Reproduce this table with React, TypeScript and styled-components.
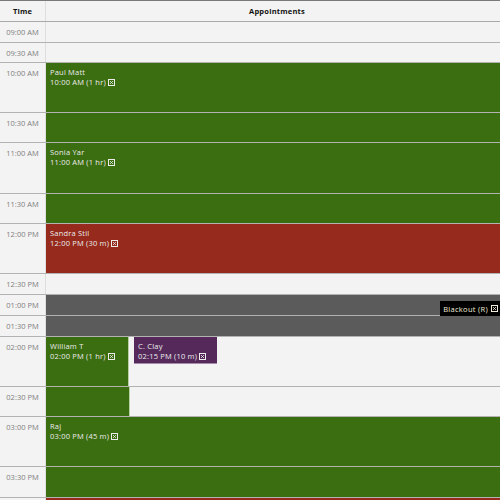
import React from "react";
import styled, { createGlobalStyle } from "styled-components";

const GlobalStyle = createGlobalStyle`
  html, body { margin: 0; padding: 0; overflow: hidden; background: #ffffff; }
  body { font-family: "Open Sans", "Noto Sans", sans-serif; }
`;

const Table = styled.div`
  width: 500px;
  border-top: 1px solid #7a7a7a;
  background: #f3f3f3;
`;

const HeaderRow = styled.div`
  display: flex;
  height: 20px;
  border-bottom: 1px solid #a9a9a9;
  background: #f3f3f3;
`;

const HeadCell = styled.div<{ $time?: boolean }>`
  ${(p) => (p.$time ? "width: 45px; border-right: 1px solid #dedede;" : "flex: 1; padding-left: 8px;")}
  display: flex;
  align-items: center;
  justify-content: center;
  font-size: 7.5px;
  font-weight: 700;
  letter-spacing: 0.2px;
  color: #111;
`;

const Row = styled.div<{ $h: number }>`
  display: flex;
  height: ${(p) => p.$h}px;
  border-bottom: 1px solid #b2b2b2;
`;

const TimeCell = styled.div`
  width: 46px;
  flex-shrink: 0;
  border-right: 1px solid #dedede;
  background: #f3f3f3;
  color: #808080;
  font-size: 7.5px;
  line-height: 10px;
  text-align: center;
  padding-top: 5px;
  box-sizing: border-box;
`;

const SlotCell = styled.div<{ $fill?: string }>`
  flex: 1;
  display: flex;
  align-items: flex-start;
  background: ${(p) => p.$fill || "#f3f3f3"};
`;

const Appt = styled.div<{ $color: string; $w?: number; $short?: boolean; $gap?: number }>`
  ${(p) => (p.$w ? `width: ${p.$w}px; flex-shrink: 0;` : "flex: 1;")}
  height: ${(p) => (p.$short ? "27px" : "100%")};
  margin-left: ${(p) => p.$gap || 0}px;
  background: ${(p) => p.$color};
  color: #ececec;
  font-size: 7.5px;
  line-height: 10px;
  letter-spacing: 0.2px;
  padding: 4px 4px 0;
  box-sizing: border-box;
  ${(p) => (p.$short ? "border-bottom: 1px solid #a58aa9;" : "")}
  ${(p) => (p.$w && !p.$short ? "border-right: 1px solid #b9d0a6;" : "")}
`;

const Filler = styled.div<{ $color: string; $w: number }>`
  width: ${(p) => p.$w}px;
  height: 100%;
  background: ${(p) => p.$color};
  border-right: 1px solid #b9d0a6;
`;

const Line = styled.div`
  display: flex;
  align-items: center;
  gap: 2px;
  white-space: nowrap;
`;

const BlackoutWrap = styled.div`
  flex: 1;
  display: flex;
  justify-content: flex-end;
  padding-top: 6px;
`;

const Blackout = styled.div`
  display: flex;
  align-items: center;
  gap: 3px;
  height: 15px;
  padding: 0 2px 0 3px;
  background: #000;
  color: #f3ecd8;
  font-size: 7.5px;
  letter-spacing: 0.3px;
  white-space: nowrap;
`;

const XBox = () => (
  <svg width="7" height="7" viewBox="0 0 7 7" style={{ flexShrink: 0 }}>
    <rect x="0.5" y="0.5" width="6" height="6" fill="none" stroke="currentColor" strokeWidth="1" />
    <path d="M2 2 L5 5 M5 2 L2 5" stroke="currentColor" strokeWidth="0.8" />
  </svg>
);

const GREEN = "#3b6d11";
const RED = "#952a1d";
const GRAY = "#5b5b5b";
const PURPLE = "#552a5b";

type A = { name: string; time: string; color: string; w?: number; short?: boolean; gap?: number };
type R = {
  t: string;
  h: number;
  fill?: string;
  appts?: A[];
  filler?: { color: string; w: number };
  blackout?: boolean;
};

const rows: R[] = [
  { t: "09:00 AM", h: 20 },
  { t: "09:30 AM", h: 19 },
  { t: "10:00 AM", h: 49, appts: [{ name: "Paul Matt", time: "10:00 AM (1 hr)", color: GREEN }] },
  { t: "10:30 AM", h: 29, fill: GREEN },
  { t: "11:00 AM", h: 50, appts: [{ name: "Sonia Yar", time: "11:00 AM (1 hr)", color: GREEN }] },
  { t: "11:30 AM", h: 29, fill: GREEN },
  { t: "12:00 PM", h: 49, appts: [{ name: "Sandra Stil", time: "12:00 PM (30 m)", color: RED }] },
  { t: "12:30 PM", h: 20 },
  { t: "01:00 PM", h: 20, fill: GRAY, blackout: true },
  { t: "01:30 PM", h: 20, fill: GRAY },
  {
    t: "02:00 PM",
    h: 49,
    appts: [
      { name: "William T", time: "02:00 PM (1 hr)", color: GREEN, w: 83 },
      { name: "C. Clay", time: "02:15 PM (10 m)", color: PURPLE, w: 83, short: true, gap: 5 },
    ],
  },
  { t: "02:30 PM", h: 29, filler: { color: GREEN, w: 83 } },
  { t: "03:00 PM", h: 49, appts: [{ name: "Raj", time: "03:00 PM (45 m)", color: GREEN }] },
  { t: "03:30 PM", h: 30, fill: GREEN },
  { t: "", h: 20, fill: RED },
];

export default function App() {
  return (
    <>
      <GlobalStyle />
      <Table>
        <HeaderRow>
          <HeadCell $time>Time</HeadCell>
          <HeadCell>Appointments</HeadCell>
        </HeaderRow>
        {rows.map((r, i) => (
          <Row key={i} $h={r.h}>
            <TimeCell>{r.t}</TimeCell>
            <SlotCell $fill={r.fill}>
              {r.filler && <Filler $color={r.filler.color} $w={r.filler.w} />}
              {r.appts?.map((a) => (
                <Appt key={a.name} $color={a.color} $w={a.w} $short={a.short} $gap={a.gap}>
                  <Line>{a.name}</Line>
                  <Line>
                    {a.time} <XBox />
                  </Line>
                </Appt>
              ))}
              {r.blackout && (
                <BlackoutWrap>
                  <Blackout>
                    Blackout (R) <XBox />
                  </Blackout>
                </BlackoutWrap>
              )}
            </SlotCell>
          </Row>
        ))}
      </Table>
    </>
  );
}
